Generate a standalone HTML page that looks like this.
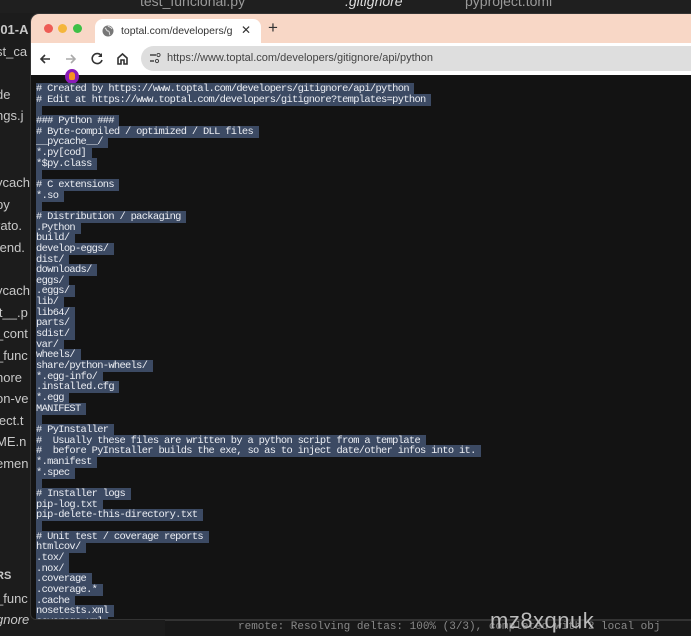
<!DOCTYPE html>
<html><head><meta charset="utf-8">
<style>
*{margin:0;padding:0;box-sizing:border-box}
body{width:691px;height:636px;overflow:hidden;background:#1c1c1c;font-family:"Liberation Sans",sans-serif;position:relative}
.side{position:absolute;left:0;top:0;width:30px;height:636px;color:#c8c8c8;font-size:13px}
.side div{position:absolute;left:-4px;white-space:nowrap}
.topbar{position:absolute;left:0;top:0;width:691px;height:13px;background:#1f1f1f;color:#9a9a9a;font-size:14px}
.win{position:absolute;left:30px;top:13px;width:670px;height:607px;background:#131313;border-radius:9px 0 0 6px;overflow:hidden;border:1px solid #333}
.tabs{position:absolute;left:0;top:0;width:100%;height:29px;background:#f8d7c6}
.dot{position:absolute;top:10px;width:9px;height:9px;border-radius:50%}
.tab{position:absolute;left:64px;top:5px;width:166px;height:25px;background:#fff;border-radius:8px 8px 0 0;font-size:10.5px;color:#333}
.tab .t{position:absolute;left:26px;top:6px;width:112px;overflow:hidden;white-space:nowrap}
.tool{position:absolute;left:0;top:29px;width:100%;height:32px;background:#fff}
.addr{position:absolute;left:110px;top:3px;width:600px;height:25px;background:#dedede;border-radius:13px;font-size:11px;color:#444;padding:6px 0 0 26px}
.code{position:absolute;left:5px;top:70px;font-family:"Liberation Mono",monospace;font-size:10.4px;letter-spacing:-0.67px;line-height:10.67px;color:#eceef3}
.code div{height:10.67px;white-space:pre}
.code span{background:#3c4a63}
.term{position:absolute;left:165px;top:620px;width:526px;height:16px;background:#181818;border-top:1px solid #333;font-family:"Liberation Mono",monospace;font-size:11px;color:#888;padding-left:73px;white-space:nowrap}
</style></head><body>
<div class="topbar"><span style="position:absolute;left:140px;top:-7px">test_funcional.py</span><span style="position:absolute;left:345px;top:-7px;color:#ddd;font-style:italic">.gitignore</span><span style="position:absolute;left:465px;top:-7px">pyproject.toml</span></div>
<div class="side">
<div style="top:22px;font-weight:bold">-01-A</div>
<div style="top:44px">st_ca</div>
<div style="top:87px">de</div>
<div style="top:108px">ngs.j</div>
<div style="top:175px">ycach</div>
<div style="top:197px">py</div>
<div style="top:218px">rato.</div>
<div style="top:240px">tend.</div>
<div style="top:283px">ycach</div>
<div style="top:305px">it__.p</div>
<div style="top:326px">_cont</div>
<div style="top:348px">_func</div>
<div style="top:370px">nore</div>
<div style="top:391px">on-ve</div>
<div style="top:413px">ject.t</div>
<div style="top:434px">ME.n</div>
<div style="top:456px">emen</div>
<div style="top:570px;font-size:11px;font-weight:bold">RS</div>
<div style="top:591px">_func</div>
<div style="top:612px;font-style:italic">gnore</div>
</div>
<div class="win">
<div class="tabs">
<div class="dot" style="left:13px;background:#ee5c55"></div>
<div class="dot" style="left:27px;background:#f4b63c"></div>
<div class="dot" style="left:42px;background:#3ec046"></div>
<div class="tab"><svg style="position:absolute;left:7px;top:6px" width="12" height="12" viewBox="0 0 12 12"><circle cx="6" cy="6" r="5.5" fill="#777"/><path d="M3 3c2 1 1 3 3 3s1 3 2 4M6 1c1 1 3 1 4 3" stroke="#ddd" fill="none" stroke-width="1"/></svg><div class="t">toptal.com/developers/gitignore</div><span style="position:absolute;left:146px;top:4px;font-size:12px">✕</span></div>
<div style="position:absolute;left:237px;top:4px;font-size:17px;color:#333">+</div>
</div>
<div class="tool">
<svg style="position:absolute;left:8px;top:10px" width="12" height="12" viewBox="0 0 12 12"><path d="M11 6H2M6 2L2 6l4 4" stroke="#333" stroke-width="1.6" fill="none"/></svg>
<svg style="position:absolute;left:34px;top:10px" width="12" height="12" viewBox="0 0 12 12"><path d="M1 6h9M6 2l4 4-4 4" stroke="#aaa" stroke-width="1.6" fill="none"/></svg>
<svg style="position:absolute;left:60px;top:9px" width="13" height="13" viewBox="0 0 13 13"><path d="M10.5 4A5 5 0 1 0 11 8" stroke="#333" stroke-width="1.6" fill="none"/><path d="M11 1v4H7z" fill="#333"/></svg>
<svg style="position:absolute;left:85px;top:9px" width="13" height="13" viewBox="0 0 13 13"><path d="M2 6L6.5 2 11 6v6H8V8H5v4H2z" stroke="#333" stroke-width="1.6" fill="none"/></svg>
<div class="addr"><svg style="position:absolute;left:8px;top:7px" width="12" height="11" viewBox="0 0 12 11"><path d="M1 2h6M1 8h4" stroke="#444" stroke-width="1.4"/><circle cx="9.5" cy="2" r="1.6" fill="none" stroke="#444"/><circle cx="8" cy="8" r="1.6" fill="none" stroke="#444"/></svg>https://www.toptal.com/developers/gitignore/api/python</div>
<div style="position:absolute;left:34px;top:26px;width:14px;height:15px;border-radius:50%;background:#8a1bb8"><div style="margin:3px 4px;width:6px;height:8px;background:#f79321;border-radius:3px 3px 2px 2px"></div></div>
</div>
<div class="code">
<div><span># Created by https://www.toptal.com/developers/gitignore/api/python </span></div>
<div><span># Edit at https://www.toptal.com/developers/gitignore?templates=python </span></div>
<div><span> </span></div>
<div><span>### Python ### </span></div>
<div><span># Byte-compiled / optimized / DLL files </span></div>
<div><span>__pycache__/ </span></div>
<div><span>*.py[cod] </span></div>
<div><span>*$py.class </span></div>
<div><span> </span></div>
<div><span># C extensions </span></div>
<div><span>*.so </span></div>
<div><span> </span></div>
<div><span># Distribution / packaging </span></div>
<div><span>.Python </span></div>
<div><span>build/ </span></div>
<div><span>develop-eggs/ </span></div>
<div><span>dist/ </span></div>
<div><span>downloads/ </span></div>
<div><span>eggs/ </span></div>
<div><span>.eggs/ </span></div>
<div><span>lib/ </span></div>
<div><span>lib64/ </span></div>
<div><span>parts/ </span></div>
<div><span>sdist/ </span></div>
<div><span>var/ </span></div>
<div><span>wheels/ </span></div>
<div><span>share/python-wheels/ </span></div>
<div><span>*.egg-info/ </span></div>
<div><span>.installed.cfg </span></div>
<div><span>*.egg </span></div>
<div><span>MANIFEST </span></div>
<div><span> </span></div>
<div><span># PyInstaller </span></div>
<div><span>#  Usually these files are written by a python script from a template </span></div>
<div><span>#  before PyInstaller builds the exe, so as to inject date/other infos into it. </span></div>
<div><span>*.manifest </span></div>
<div><span>*.spec </span></div>
<div><span> </span></div>
<div><span># Installer logs </span></div>
<div><span>pip-log.txt </span></div>
<div><span>pip-delete-this-directory.txt </span></div>
<div><span> </span></div>
<div><span># Unit test / coverage reports </span></div>
<div><span>htmlcov/ </span></div>
<div><span>.tox/ </span></div>
<div><span>.nox/ </span></div>
<div><span>.coverage </span></div>
<div><span>.coverage.* </span></div>
<div><span>.cache </span></div>
<div><span>nosetests.xml </span></div>
<div><span>coverage.xml </span></div>
</div>
</div>
<div class="term">remote: Resolving deltas: 100% (3/3), completed with 2 local obj</div>
<div style="position:absolute;left:490px;top:608px;font-size:22px;color:#bbb;letter-spacing:0.5px">mz8xqnuk</div>
</body></html>
